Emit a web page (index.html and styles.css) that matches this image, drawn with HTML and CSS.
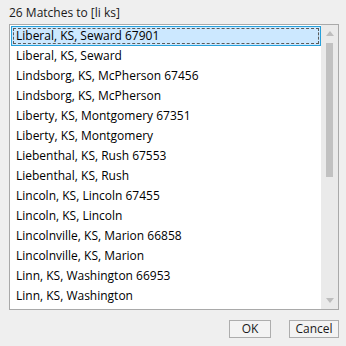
FILE: index.html
```html
<!DOCTYPE html>
<html>
<head>
<meta charset="utf-8">
<link rel="stylesheet" href="styles.css">
</head>
<body>
<div class="dialog">
  <div class="label">26 Matches to [li ks]</div>
  <div class="listbox">
    <div class="items">
      <div class="item selected"><span>Liberal, KS, Seward 67901</span></div>
      <div class="item"><span>Liberal, KS, Seward</span></div>
      <div class="item"><span>Lindsborg, KS, McPherson 67456</span></div>
      <div class="item"><span>Lindsborg, KS, McPherson</span></div>
      <div class="item"><span>Liberty, KS, Montgomery 67351</span></div>
      <div class="item"><span>Liberty, KS, Montgomery</span></div>
      <div class="item"><span>Liebenthal, KS, Rush 67553</span></div>
      <div class="item"><span>Liebenthal, KS, Rush</span></div>
      <div class="item"><span>Lincoln, KS, Lincoln 67455</span></div>
      <div class="item"><span>Lincoln, KS, Lincoln</span></div>
      <div class="item"><span>Lincolnville, KS, Marion 66858</span></div>
      <div class="item"><span>Lincolnville, KS, Marion</span></div>
      <div class="item"><span>Linn, KS, Washington 66953</span></div>
      <div class="item"><span>Linn, KS, Washington</span></div>
    </div>
    <div class="scrollbar">
      <div class="arrow up"></div>
      <div class="track"><div class="thumb"></div></div>
      <div class="arrow down"></div>
    </div>
  </div>
  <div class="buttons">
    <button class="btn ok">OK</button>
    <button class="btn cancel">Cancel</button>
  </div>
</div>
</body>
</html>
```
FILE: styles.css
```css
html, body {
  margin: 0;
  padding: 0;
  background: #efefef;
}
body {
  width: 346px;
  height: 346px;
  overflow: hidden;
  font-family: "Open Sans", "Noto Sans", sans-serif;
  font-size: 12px;
  color: #000;
}
.dialog {
  display: flex;
  flex-direction: column;
  padding: 5px 7px 0 9px;
}
.label {
  line-height: 16px;
  height: 16px;
  margin-bottom: 3px;
  color: #1a1a1a;
}
.listbox {
  display: flex;
  height: 284px;
  border: 1px solid #a9a9a9;
  background: #fff;
}
.items {
  flex: 1;
  display: flex;
  flex-direction: column;
  padding: 1px 0 0 1px;
  overflow: hidden;
}
.item {
  height: 20px;
  line-height: 20px;
  padding-left: 5px;
  white-space: nowrap;
  box-sizing: border-box;
}
.item.selected {
  position: relative;
  background: #cce8ff;
  border: 1px solid #26a0da;
  line-height: 18px;
  padding-left: 4px;
}
.item.selected::after {
  content: "";
  position: absolute;
  inset: 1px;
  border: 1px dashed #5a5a5a;
}
.scrollbar {
  width: 17px;
  background: #eaeaea;
  display: flex;
  flex-direction: column;
  align-items: center;
}
.arrow {
  width: 0;
  height: 0;
  border-left: 4px solid transparent;
  border-right: 4px solid transparent;
}
.arrow.up {
  margin-top: 6px;
  border-bottom: 5px solid #bdbdbd;
}
.arrow.down {
  margin-bottom: 6px;
  border-top: 5px solid #bdbdbd;
}
.track {
  flex: 1;
  width: 100%;
  display: flex;
  justify-content: center;
  padding-top: 7px;
}
.thumb {
  width: 7px;
  height: 134px;
  background: #c1c1c1;
}
.buttons {
  display: flex;
  justify-content: flex-end;
  gap: 18px;
  margin-top: 10px;
}
.btn {
  font-family: inherit;
  font-size: 12px;
  color: #1a1a1a;
  height: 18px;
  padding: 0;
  border: 1px solid #adadad;
  background: #f3f3f3;
  line-height: 16px;
}
.btn.ok { width: 42px; }
.btn.cancel { width: 50px; }
```
